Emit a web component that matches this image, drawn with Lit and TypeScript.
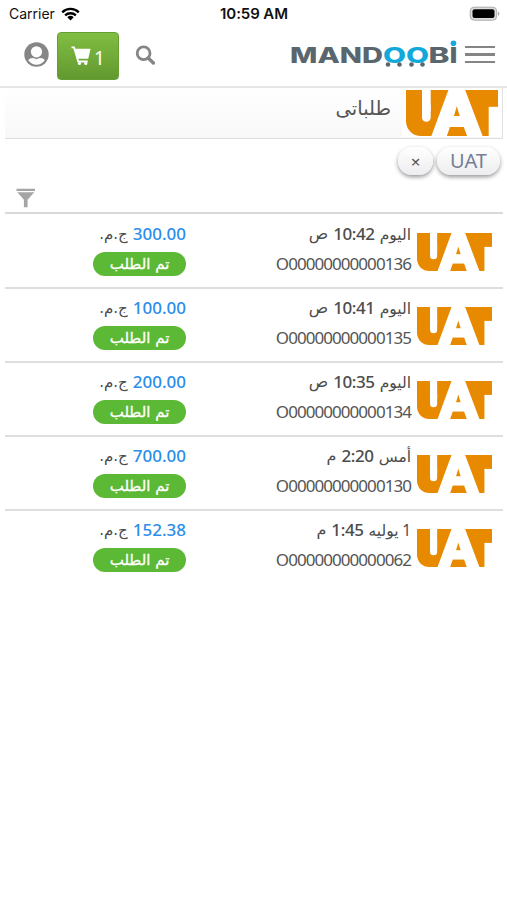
import { LitElement, html, svg, css } from "lit";
import { customElement, property } from "lit/decorators.js";

interface Order {
  day: string;
  time: string;
  half: string;
  id: string;
  amount: string;
}

const ORDERS: Order[] = [
  { day: "اليوم", time: "10:42", half: "ص", id: "O00000000000136", amount: "300.00" },
  { day: "اليوم", time: "10:41", half: "ص", id: "O00000000000135", amount: "100.00" },
  { day: "اليوم", time: "10:35", half: "ص", id: "O00000000000134", amount: "200.00" },
  { day: "أمس", time: "2:20", half: "م", id: "O00000000000130", amount: "700.00" },
  { day: "1 يوليه", time: "1:45", half: "م", id: "O00000000000062", amount: "152.38" },
];

@customElement("uat-logo")
export class UatLogo extends LitElement {
  static styles = css`
    :host { display: block; }
    svg { display: block; width: 100%; height: 100%; overflow: visible; }
    .orange { fill: #e88a00; }
    .white { fill: #fff; }
    .a { font-family: Inter, "Open Sans", sans-serif; font-weight: 700; font-size: 61px; fill: #fff; stroke: #fff; stroke-width: 4; }
  `;
  render() {
    return html`<svg viewBox="0 0 92 46.5" preserveAspectRatio="none" direction="ltr" role="img" aria-label="UAT">
      ${svg`
        <rect class="orange" x="0" y="0" width="60" height="46.5" rx="15" />
        <rect class="orange" x="0" y="0" width="60" height="24" />
        <rect class="orange" x="36" y="0" width="46.7" height="46.5" />
        <rect class="orange" x="60" y="0" width="32" height="17" />
        <rect class="white" x="16" y="12" width="8.7" height="20" rx="4.3" />
        <rect class="white" x="16" y="0" width="8.7" height="22" />
        <text class="a" x="26.5" y="45" textLength="49" lengthAdjust="spacingAndGlyphs">A</text>`}
    </svg>`;
  }
}

@customElement("order-row")
export class OrderRow extends LitElement {
  @property({ attribute: false }) order!: Order;
  static styles = css`
    :host {
      display: grid;
      grid-template-columns: 75px 225px 1fr;
      height: 74px;
      box-sizing: border-box;
      border-bottom: 2px solid #dedede;
      padding: 0 11px 0 0;
      color: #555;
    }
    :host([last]) { border-bottom-color: transparent; }
    uat-logo { width: 75px; height: 38px; margin-top: 18px; }
    .info { padding: 5px 6px 0 0; }
    .line { display: flex; align-items: center; height: 28px; white-space: pre; font: 500 17px/28px "Noto Sans", sans-serif; color: #4c4c4c; }
    .ar { font: 16px/28px "DejaVu Sans", sans-serif; }
    .day { font-family: "Noto Sans", "DejaVu Sans", sans-serif; font-size: 15.5px; word-spacing: -0.5px; }
    .time { letter-spacing: -0.4px; margin: 0 5px; direction: ltr; }
    .id { font: 400 17px/32px "Noto Sans", sans-serif; letter-spacing: -0.95px; height: 32px; direction: ltr; text-align: right; color: #555; }
    .price { padding: 5px 6px 0 0; }
    .price .ar { font-size: 15px; }
    .amount { color: #2b8eea; margin-left: 5px; }
    .pill { width: 93px; height: 24px; margin-top: 4px; border-radius: 12px; background: #5cb936; color: #fff; text-align: center; font: 500 15px/25px "DejaVu Sans", sans-serif; -webkit-text-stroke: 0.3px #fff; overflow: hidden; }
  `;
  render() {
    const o = this.order;
    return html`
      <uat-logo></uat-logo>
      <div class="info">
        <div class="line"><span class="ar day">${o.day}</span><span class="time">${o.time}</span><span class="ar">${o.half}</span></div>
        <div class="id">${o.id}</div>
      </div>
      <div class="price">
        <div class="line"><span class="amount">${o.amount}</span><span class="ar">ج.م.</span></div>
        <div class="pill">تم الطلب</div>
      </div>`;
  }
}

@customElement("app-root")
export class AppRoot extends LitElement {
  static styles = css`
    :host { display: block; height: 900px; background: #fff; overflow: hidden; direction: rtl; font-family: "Noto Sans", "DejaVu Sans", sans-serif; }
    svg { display: block; }
    .status { direction: ltr; display: grid; grid-template-columns: 1fr auto 1fr; align-items: center; height: 28px; padding: 0 6px 0 9px; font: 14px/28px Inter, sans-serif; color: #111; }
    .carrier { display: flex; align-items: center; gap: 6px; }
    .clock { font-weight: 600; font-size: 15px; letter-spacing: -0.1px; margin-right: 2px; }
    .battery { justify-self: end; }
    .bar { direction: ltr; display: flex; height: 58px; box-sizing: border-box; padding: 0 12px 0 24px; }
    .user { margin-top: 14px; }
    .cart { display: flex; align-items: center; justify-content: center; gap: 3px; width: 62px; height: 48px; margin: 4px 0 0 8px; box-sizing: border-box; border: 1px solid #659f31; border-radius: 4px; background: linear-gradient(#80be42, #639930); color: #fff; font: 19px/48px "Noto Sans", sans-serif; }
    .count { padding-top: 3px; }
    .search { margin: 17px 0 0 16px; }
    .brand { margin: 12px 8px 0 auto; overflow: visible; }
    .menu { display: grid; gap: 5px; align-content: start; padding-top: 18px; }
    .stripe { width: 30px; height: 2.4px; background: #858585; }
    .brand text { font-family: Inter, sans-serif; font-weight: 800; font-size: 21px; fill: #59666e; }
    .brand .blue { fill: #11a9dc; }
    .rule { height: 2px; background: #e4e5e5; }
    .heading { display: flex; margin: 0 4px 0 5px; height: 51px; box-sizing: border-box; border-bottom: 1.5px solid #dedede; border-right: 1px solid #e2e2e2; background: linear-gradient(#fff, #f8f8f8); }
    .heading uat-logo { width: 92px; height: 46px; padding: 2px 4px 1px 4px; background: #fff; }
    h1 { margin: 0 11px 0 0; font: 19.5px/42px "DejaVu Sans", sans-serif; color: #555; }
    .filters { display: flex; gap: 4px; padding: 8px 7px 0; height: 46px; box-sizing: border-box; }
    .chip { height: 28px; box-sizing: border-box; border-radius: 14px; background: linear-gradient(#fff, #ededf0); box-shadow: 0 2px 4px rgba(0,0,0,.42); color: #747f93; font: 20px/27px "Noto Sans", sans-serif; text-align: center; width: 63px; }
    .close { width: 35px; font-size: 17px; color: #555; line-height: 30px; }
    .tools { display: flex; justify-content: flex-end; height: 29px; box-sizing: border-box; margin: 0 4px 0 5px; padding: 3px 0 0 11px; border-bottom: 2px solid #d9d9d9; }
    .rows { margin: 0 4px 0 5px; padding-top: 1px; }
  `;
  render() {
    return html`
      <div class="status">
        <div class="carrier"><span>Carrier</span>
          <svg width="19" height="14" viewBox="0 0 19 14" fill="none" stroke="#000" stroke-width="2.3"><path d="M1.2 5.3a12 12 0 0 1 16.6 0M4.1 8.4a7.8 7.8 0 0 1 10.8 0"/><path fill="#000" stroke="none" d="M6.3 10.2a4.8 4.8 0 0 1 6.4 0L9.5 13.5z"/></svg>
        </div>
        <span class="clock">10:59 AM</span>
        <svg class="battery" width="32" height="16" viewBox="0 0 32 16"><rect x="1.2" y="1.2" width="26.5" height="13" rx="4" fill="#ddd" stroke="#aaa"/><rect x="3.5" y="3.3" width="22" height="8.8" rx="2" fill="#000"/><path d="M29 5.5q3 2.2 0 4.5z" fill="#aaa"/></svg>
      </div>
      <div class="bar">
        <svg class="user" width="25" height="25" viewBox="0 0 25 25"><circle cx="12.5" cy="12.5" r="12.2" fill="#868686"/><path d="M4.2 18.3C6 16 8.5 15.3 12.5 17.2C16.5 15.3 19 16 20.8 18.3A10 10 0 0 1 4.2 18.3z" fill="#fff"/><circle cx="12.5" cy="9.8" r="5.6" fill="#fff"/></svg>
        <div class="cart">
          <svg width="20" height="20" viewBox="0 0 20 20"><path d="M.5 1.3h2.5l4.2 14.2h9.5" fill="none" stroke="#fff" stroke-width="1.8"/><path d="M4 2.7h15.5l-2.2 10H6.6z" fill="#fff"/><circle cx="8.5" cy="17.5" r="1.6" fill="#fff"/><circle cx="14.8" cy="17.5" r="1.6" fill="#fff"/></svg>
          <span class="count">1</span>
        </div>
        <svg class="search" width="21" height="21" viewBox="0 0 21 21" fill="none" stroke="#858585"><circle cx="8.6" cy="8.2" r="6.4" stroke-width="2.8"/><path d="M13.2 13l5.2 5" stroke-width="3.4" stroke-linecap="round"/></svg>
        <svg class="brand" width="167" height="28" viewBox="0 0 167 28">
          <text x="0" y="23" textLength="93" lengthAdjust="spacingAndGlyphs">MAND</text>
          <text class="blue" x="93" y="23" textLength="46" lengthAdjust="spacingAndGlyphs">OO</text>
          <text x="138.5" y="23" textLength="21" lengthAdjust="spacingAndGlyphs">B</text>
          <text x="159.5" y="23" textLength="8" lengthAdjust="spacingAndGlyphs">I</text>
          <g fill="#59666e"><circle cx="98" cy="24.5" r="2.3"/><circle cx="109.5" cy="24.5" r="2.3"/><circle cx="121.5" cy="24.5" r="2.3"/><circle cx="132.5" cy="24.5" r="2.3"/></g>
          <circle cx="163.5" cy="3.2" r="2.8" fill="#11a9dc"/>
        </svg>
        <div class="menu"><div class="stripe"></div><div class="stripe"></div><div class="stripe"></div></div>
      </div>
      <div class="rule"></div>
      <div class="heading"><uat-logo></uat-logo><h1>طلباتى</h1></div>
      <div class="filters"><div class="chip">UAT</div><div class="chip close">×</div></div>
      <div class="tools"><svg width="20" height="20" viewBox="0 0 20 20" fill="#a5a5a5"><path d="M.5.8h18.5v2.2H.5zM1.3 4.3h17l-6.7 7.4v7.5H7.9v-7.5z"/></svg></div>
      <div class="rows">${ORDERS.map((o, i) => html`<order-row .order=${o} ?last=${i === ORDERS.length - 1}></order-row>`)}</div>`;
  }
}
